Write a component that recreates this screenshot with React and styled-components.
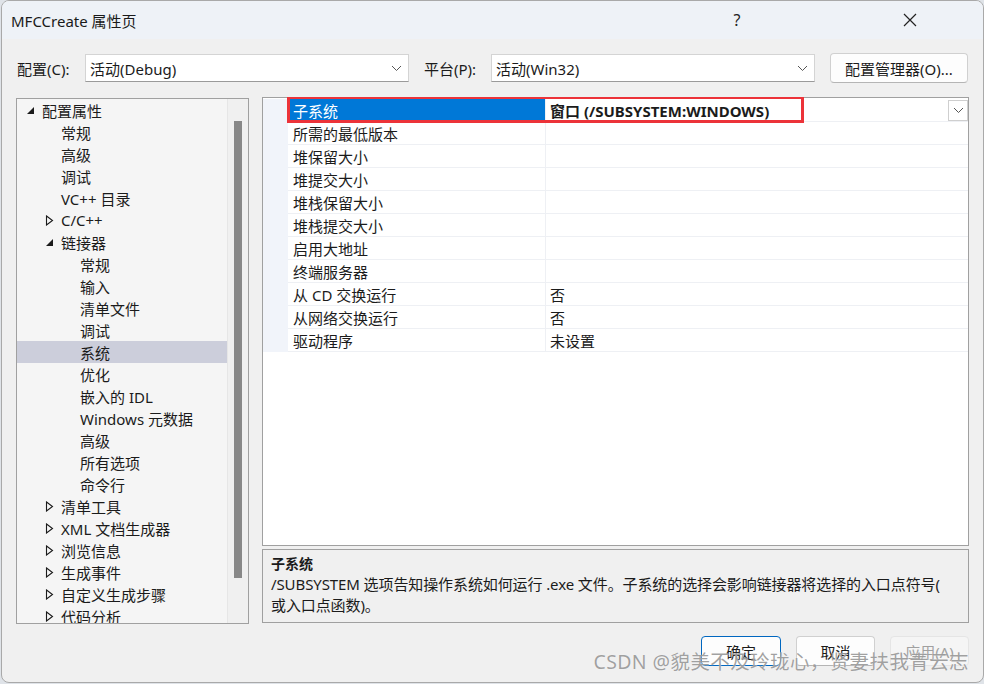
import React from 'react';
import styled, { createGlobalStyle } from 'styled-components';

const GlobalStyle = createGlobalStyle`
  html, body {
    margin: 0;
    padding: 0;
    background: #dfe3e8;
  }
  * { box-sizing: border-box; }
`;

const FONT = `"Noto Sans", "Noto Sans CJK SC", sans-serif`;

const Window = styled.div`
  position: relative;
  width: 983px;
  height: 683px;
  margin-left: 1px;
  background: #f0f0f0;
  border: 1px solid #a9a9a9;
  border-radius: 8px;
  overflow: hidden;
  display: flex;
  flex-direction: column;
  font-family: ${FONT};
  font-size: 15px;
  color: #1b1b1b;
`;

const TitleBar = styled.div`
  height: 38px;
  flex: none;
  background: #eef2f7;
  display: flex;
  align-items: center;
  padding-left: 9px;
`;

const Title = styled.div`
  flex: 1;
  font-size: 15px;
  color: #1a1a1a;
`;

const TitleButton = styled.div`
  width: 60px;
  height: 38px;
  margin-left: ${({ ml }) => ml || 0}px;
  margin-right: ${({ mr }) => mr || 0}px;
  display: flex;
  align-items: center;
  justify-content: center;
  font-size: 16px;
  color: #222;
`;

const Body = styled.div`
  flex: 1;
  display: flex;
  flex-direction: column;
  padding: 14px 14px 0 14px;
`;

const ConfigRow = styled.div`
  display: flex;
  align-items: center;
  height: 30px;
`;

const Label = styled.div`
  width: ${({ w }) => w}px;
  flex: none;
  padding-left: ${({ pl }) => pl || 0}px;
  font-size: 15px;
  white-space: nowrap;
`;

const Select = styled.div`
  width: 324px;
  flex: none;
  height: 28px;
  background: #fff;
  border: 1px solid #d4d4d4;
  border-bottom-color: #9a9a9a;
  display: flex;
  align-items: center;
  padding-left: 4px;
  padding-right: 6px;
`;

const SelectText = styled.div`
  flex: 1;
`;

const PushButton = styled.div`
  width: ${({ w }) => w}px;
  flex: none;
  height: 30px;
  display: flex;
  align-items: center;
  justify-content: center;
  background: ${({ disabled }) => (disabled ? '#f5f5f5' : '#fdfdfd')};
  border: 1px solid ${({ primary, disabled }) => (primary ? '#0067c0' : disabled ? '#e5e5e5' : '#d0d0d0')};
  border-bottom-color: ${({ primary, disabled }) => (primary ? '#0067c0' : disabled ? '#e5e5e5' : '#b5b5b5')};
  border-radius: 4px;
  color: ${({ disabled }) => (disabled ? '#a0a0a0' : '#1b1b1b')};
  font-size: 15px;
  white-space: nowrap;
  margin-left: ${({ ml }) => ml || 0}px;
`;

const Main = styled.div`
  display: flex;
  margin-top: 14px;
  height: 526px;
`;

const Tree = styled.div`
  width: 233px;
  height: 526px;
  margin-top: 1px;
  border: 1px solid #a0a0a0;
  background: #f5f5f5;
  display: flex;
  overflow: hidden;
`;

const TreeList = styled.div`
  flex: 1;
  overflow: hidden;
`;

const TreeRow = styled.div`
  height: 22px;
  display: flex;
  align-items: center;
  padding-left: ${({ level }) => 6 + level * 19}px;
  background: ${({ selected }) => (selected ? '#cccedb' : 'transparent')};
  white-space: nowrap;
`;

const Toggle = styled.div`
  width: 19px;
  flex: none;
  display: flex;
  align-items: center;
  padding-left: 3px;
`;

const Scrollbar = styled.div`
  width: 21px;
  flex: none;
  background: #f0f0f0;
  border-left: 1px solid #e6e6e6;
  padding: 22px 0 0 6px;
`;

const Thumb = styled.div`
  width: 8px;
  height: 457px;
  background: #888888;
`;

const RightCol = styled.div`
  flex: 1;
  margin-left: 13px;
  display: flex;
  flex-direction: column;
`;

const Grid = styled.div`
  position: relative;
  height: 449px;
  border: 1px solid #a0a0a0;
  background: #fff;
  padding-top: 1px;
`;

const GridRow = styled.div`
  display: flex;
  height: 23px;
`;

const Gutter = styled.div`
  width: 25px;
  flex: none;
  background: #f1f4fa;
`;

const NameCell = styled.div`
  width: 258px;
  flex: none;
  display: flex;
  align-items: center;
  padding-left: 5px;
  border-bottom: 1px solid #eef0f4;
  border-right: 1px solid #eef0f4;
  background: ${({ selected }) => (selected ? '#0078d7' : '#fff')};
  color: ${({ selected }) => (selected ? '#fff' : '#1b1b1b')};
`;

const ValueCell = styled.div`
  flex: 1;
  display: flex;
  align-items: center;
  padding-left: 4px;
  border-bottom: 1px solid #eef0f4;
  font-weight: ${({ bold }) => (bold ? 700 : 400)};
`;

const ValueText = styled.div`
  flex: 1;
`;

const DropButton = styled.div`
  width: 20px;
  height: 21px;
  background: #fff;
  border: 1px solid #cfcfcf;
  display: flex;
  align-items: center;
  justify-content: center;
`;

const Highlight = styled.div`
  position: absolute;
  left: 24px;
  top: -1px;
  width: 517px;
  height: 26px;
  border: 3px solid #ec3339;
  border-top-width: 2px;
  pointer-events: none;
`;

const Description = styled.div`
  margin-top: 3px;
  height: 74px;
  border: 1px solid #a0a0a0;
  background: #f0f0f0;
  padding: 3px 8px 0 8px;
  line-height: 21px;
`;

const DescTitle = styled.div`
  font-weight: 700;
  font-size: 14px;
`;

const DescText = styled.div`
  font-size: 15px;
  white-space: nowrap;
  letter-spacing: -0.1px;
`;

const Footer = styled.div`
  position: relative;
  display: flex;
  justify-content: flex-end;
  margin-top: 13px;
`;

const Watermark = styled.div`
  position: absolute;
  right: 0;
  top: 10px;
  font-size: 19.5px;
  letter-spacing: 0.4px;
  color: rgba(130, 130, 130, 0.75);
  text-shadow: 0 0 1px rgba(255, 255, 255, 0.9);
  pointer-events: none;
  white-space: nowrap;
`;

const Chevron = () => (
  <svg width="11" height="7" viewBox="0 0 11 7">
    <path d="M1 1 L5.5 5.5 L10 1" fill="none" stroke="#555" strokeWidth="1" />
  </svg>
);

const Expanded = () => (
  <svg width="9" height="9" viewBox="0 0 9 9">
    <path d="M8 1 L8 8 L1 8 Z" fill="#1b1b1b" />
  </svg>
);

const Collapsed = () => (
  <svg width="9" height="11" viewBox="0 0 9 11">
    <path d="M1.5 1 L7.5 5.5 L1.5 10 Z" fill="none" stroke="#1b1b1b" strokeWidth="1.1" />
  </svg>
);

const CloseIcon = () => (
  <svg width="14" height="14" viewBox="0 0 14 14">
    <path d="M1 1 L13 13 M13 1 L1 13" stroke="#222" strokeWidth="1.2" />
  </svg>
);

const treeItems = [
  { label: '配置属性', level: 0, toggle: 'open' },
  { label: '常规', level: 1 },
  { label: '高级', level: 1 },
  { label: '调试', level: 1 },
  { label: 'VC++ 目录', level: 1 },
  { label: 'C/C++', level: 1, toggle: 'closed' },
  { label: '链接器', level: 1, toggle: 'open' },
  { label: '常规', level: 2 },
  { label: '输入', level: 2 },
  { label: '清单文件', level: 2 },
  { label: '调试', level: 2 },
  { label: '系统', level: 2, selected: true },
  { label: '优化', level: 2 },
  { label: '嵌入的 IDL', level: 2 },
  { label: 'Windows 元数据', level: 2 },
  { label: '高级', level: 2 },
  { label: '所有选项', level: 2 },
  { label: '命令行', level: 2 },
  { label: '清单工具', level: 1, toggle: 'closed' },
  { label: 'XML 文档生成器', level: 1, toggle: 'closed' },
  { label: '浏览信息', level: 1, toggle: 'closed' },
  { label: '生成事件', level: 1, toggle: 'closed' },
  { label: '自定义生成步骤', level: 1, toggle: 'closed' },
  { label: '代码分析', level: 1, toggle: 'closed' },
];

const properties = [
  { name: '子系统', value: '窗口 (/SUBSYSTEM:WINDOWS)', selected: true },
  { name: '所需的最低版本', value: '' },
  { name: '堆保留大小', value: '' },
  { name: '堆提交大小', value: '' },
  { name: '堆栈保留大小', value: '' },
  { name: '堆栈提交大小', value: '' },
  { name: '启用大地址', value: '' },
  { name: '终端服务器', value: '' },
  { name: '从 CD 交换运行', value: '否' },
  { name: '从网络交换运行', value: '否' },
  { name: '驱动程序', value: '未设置' },
];

const App = () => {
  return (
    <>
      <GlobalStyle />
      <Window>
        <TitleBar>
          <Title>MFCCreate 属性页</Title>
          <TitleButton>?</TitleButton>
          <TitleButton ml={113} mr={43}>
            <CloseIcon />
          </TitleButton>
        </TitleBar>
        <Body>
          <ConfigRow>
            <Label w={69} pl={1}>配置(C):</Label>
            <Select>
              <SelectText>活动(Debug)</SelectText>
              <Chevron />
            </Select>
            <Label w={82} pl={15}>平台(P):</Label>
            <Select>
              <SelectText>活动(Win32)</SelectText>
              <Chevron />
            </Select>
            <PushButton w={138} ml={15}>配置管理器(O)...</PushButton>
          </ConfigRow>
          <Main>
            <Tree>
              <TreeList>
                {treeItems.map((item, i) => (
                  <TreeRow key={i} level={item.level} selected={item.selected}>
                    <Toggle>
                      {item.toggle === 'open' && <Expanded />}
                      {item.toggle === 'closed' && <Collapsed />}
                    </Toggle>
                    {item.label}
                  </TreeRow>
                ))}
              </TreeList>
              <Scrollbar>
                <Thumb />
              </Scrollbar>
            </Tree>
            <RightCol>
              <Grid>
                {properties.map((p, i) => (
                  <GridRow key={i}>
                    <Gutter />
                    <NameCell selected={p.selected}>{p.name}</NameCell>
                    <ValueCell bold={p.selected}>
                      <ValueText>{p.value}</ValueText>
                      {p.selected && (
                        <DropButton>
                          <Chevron />
                        </DropButton>
                      )}
                    </ValueCell>
                  </GridRow>
                ))}
                <Highlight />
              </Grid>
              <Description>
                <DescTitle>子系统</DescTitle>
                <DescText>
                  /SUBSYSTEM 选项告知操作系统如何运行 .exe 文件。子系统的选择会影响链接器将选择的入口点符号(
                </DescText>
                <DescText>或入口点函数)。</DescText>
              </Description>
            </RightCol>
          </Main>
          <Footer>
            <PushButton w={80} primary>确定</PushButton>
            <PushButton w={79} ml={15}>取消</PushButton>
            <PushButton w={79} ml={15} disabled>应用(A)</PushButton>
            <Watermark>CSDN @貌美不及玲珑心，贤妻扶我青云志</Watermark>
          </Footer>
        </Body>
      </Window>
    </>
  );
};

export default App;
